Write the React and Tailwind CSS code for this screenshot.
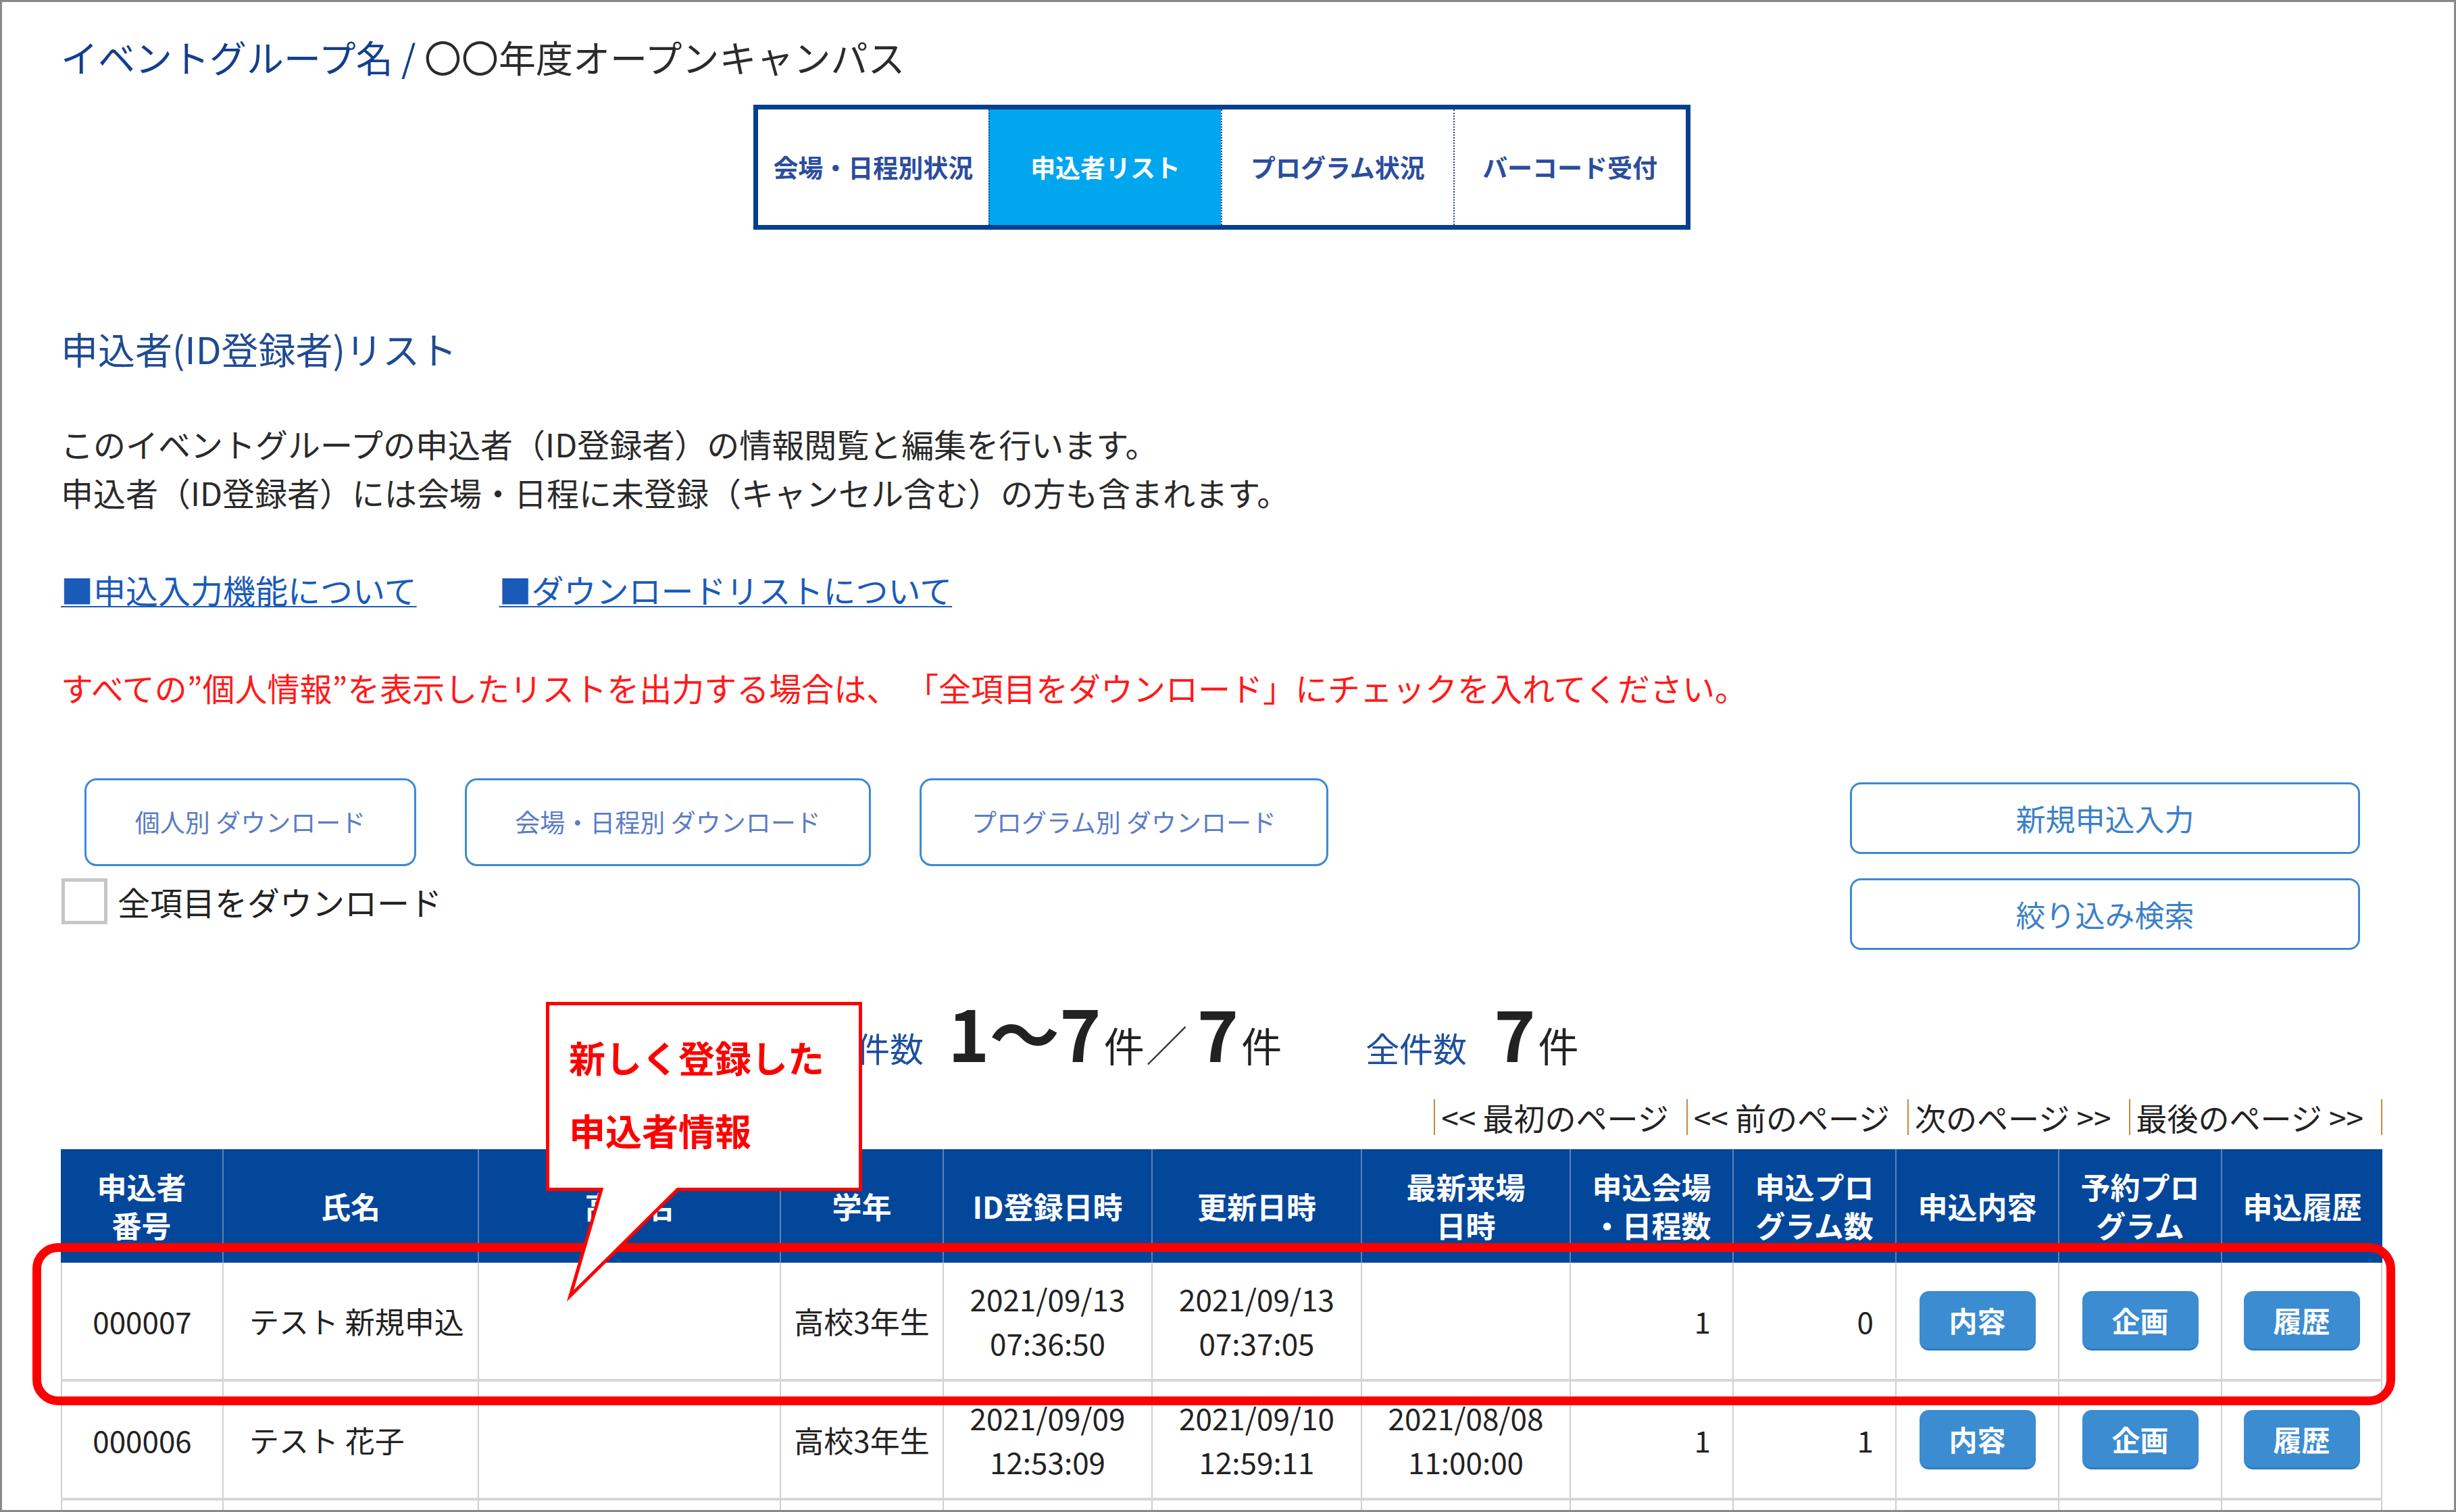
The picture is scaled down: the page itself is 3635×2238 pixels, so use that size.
import React from "react";

const tabs = [
  { label: "会場・日程別状況", active: false },
  { label: "申込者リスト", active: true },
  { label: "プログラム状況", active: false },
  { label: "バーコード受付", active: false },
];

const cols =
  "grid grid-cols-[239px_378px_447px_241px_309px_310px_309px_241px_241px_241px_241px_239px]";

const headers = [
  ["申込者", "番号"],
  ["氏名"],
  ["高校名"],
  ["学年"],
  ["ID登録日時"],
  ["更新日時"],
  ["最新来場", "日時"],
  ["申込会場", "・日程数"],
  ["申込プロ", "グラム数"],
  ["申込内容"],
  ["予約プロ", "グラム"],
  ["申込履歴"],
];

const rows = [
  {
    no: "000007",
    name: "テスト 新規申込",
    grade: "高校3年生",
    idDate: ["2021/09/13", "07:36:50"],
    upd: ["2021/09/13", "07:37:05"],
    visit: null,
    venues: "1",
    programs: "0",
  },
  {
    no: "000006",
    name: "テスト 花子",
    grade: "高校3年生",
    idDate: ["2021/09/09", "12:53:09"],
    upd: ["2021/09/10", "12:59:11"],
    visit: ["2021/08/08", "11:00:00"],
    venues: "1",
    programs: "1",
  },
];

function CellButton({ children }) {
  return (
    <div className="flex h-[88px] w-[172px] items-center justify-center rounded-[14px] border-b-[3px] border-[#2f7cc0] bg-[#3b8cd1] text-[42px] font-bold text-white">
      {children}
    </div>
  );
}

function TwoLine({ lines }) {
  if (!lines) return null;
  return (
    <div className="text-center leading-[65px]">
      {lines[0]}
      <br />
      {lines[1]}
    </div>
  );
}

function BodyRow({ r }) {
  const cell = "flex h-[172px] items-center border-l-2 border-[#d0d0d0]";
  return (
    <div className={`${cols} border-b-4 border-[#d6d6d6] text-[44px] text-[#222]`}>
      <div className={`${cell} justify-center`}>{r.no}</div>
      <div className={`${cell} pl-[38px] whitespace-nowrap`}>{r.name}</div>
      <div className={cell}></div>
      <div className={`${cell} justify-center`}>{r.grade}</div>
      <div className={`${cell} justify-center`}>
        <TwoLine lines={r.idDate} />
      </div>
      <div className={`${cell} justify-center`}>
        <TwoLine lines={r.upd} />
      </div>
      <div className={`${cell} justify-center`}>
        <TwoLine lines={r.visit} />
      </div>
      <div className={`${cell} justify-end pr-[32px]`}>{r.venues}</div>
      <div className={`${cell} justify-end pr-[32px]`}>{r.programs}</div>
      <div className={`${cell} justify-center`}>
        <CellButton>内容</CellButton>
      </div>
      <div className={`${cell} justify-center`}>
        <CellButton>企画</CellButton>
      </div>
      <div className={`${cell} justify-center border-r-2`}>
        <CellButton>履歴</CellButton>
      </div>
    </div>
  );
}

function EmptyRow() {
  const cell = "h-[172px] border-l-2 border-[#d0d0d0]";
  return (
    <div className={cols}>
      {headers.map((_, i) => (
        <div key={i} className={i === headers.length - 1 ? `${cell} border-r-2` : cell}></div>
      ))}
    </div>
  );
}

function PageLink({ children, last }) {
  return (
    <div className="flex items-center">
      <span className="h-[53px] w-[2px] bg-[#c7893c]"></span>
      <span className="pl-[9px] pr-[26px]">{children}</span>
      {last && <span className="h-[53px] w-[2px] bg-[#c7893c]"></span>}
    </div>
  );
}

export default function App() {
  return (
    <div className="relative h-[2238px] w-[3635px] overflow-hidden border-[3px] border-[#8a8a8a] bg-white font-['Noto_Sans_CJK_JP','Noto_Sans',sans-serif] text-[#222]">
      <div className="pl-[87px] pr-[106px] pt-[44px]">
        {/* page title */}
        <h1 className="whitespace-nowrap text-[55px] font-normal leading-[73px]">
          <span className="text-[#123f8c]">イベントグループ名 / </span>
          <span className="text-[#2b2b2b]">〇〇年度オープンキャンパス</span>
        </h1>

        {/* tab navigation */}
        <nav className="mx-auto mt-[35px] flex h-[185px] w-[1387px] border-[7px] border-[#053f8f]">
          {tabs.map((t, i) => (
            <div
              key={t.label}
              className={`flex flex-1 items-center justify-center text-[37px] font-bold ${
                i > 0 ? "border-l-2 border-dotted border-[#1f4690]" : ""
              } ${t.active ? "bg-[#00a6ee] text-white" : "bg-white text-[#2b4d9d]"}`}
            >
              {t.label}
            </div>
          ))}
        </nav>

        {/* section heading */}
        <h2 className="mt-[139px] text-[55px] font-normal leading-[72px] text-[#1f4b93]">
          申込者(ID登録者)リスト
        </h2>

        <p className="mt-[69px] text-[48px] leading-[72px] text-[#2a2a2a]">
          このイベントグループの申込者（ID登録者）の情報閲覧と編集を行います。
          <br />
          申込者（ID登録者）には会場・日程に未登録（キャンセル含む）の方も含まれます。
        </p>

        <div className="mt-[72px] flex gap-[122px] text-[48px] leading-[72px] text-[#1a5bb8]">
          <a className="underline decoration-2 underline-offset-[4px]">■申込入力機能について</a>
          <a className="underline decoration-2 underline-offset-[4px]">■ダウンロードリストについて</a>
        </div>

        <p className="mt-[73px] whitespace-nowrap text-[48px] leading-[72px] text-[#ff1a1a]">
          すべての”個人情報”を表示したリストを出力する場合は、 「全項目をダウンロード」にチェックを入れてください。
        </p>

        {/* download / action buttons */}
        <div className="mt-[99px] flex items-start justify-between">
          <div>
            <div className="ml-[35px] flex gap-[72px]">
              {[
                ["個人別 ダウンロード", "w-[491px]"],
                ["会場・日程別 ダウンロード", "w-[601px]"],
                ["プログラム別 ダウンロード", "w-[605px]"],
              ].map(([label, w]) => (
                <div
                  key={label}
                  className={`${w} flex h-[130px] items-center justify-center rounded-[18px] border-[3px] border-[#3e8ad2] text-[37px] text-[#5b7cc5]`}
                >
                  {label}
                </div>
              ))}
            </div>
            <div className="mt-[18px] flex items-center">
              <span className="ml-[1px] h-[68px] w-[68px] border-[5px] border-[#c6c6c6] bg-white"></span>
              <span className="ml-[15px] text-[48px] leading-[68px] text-[#222]">全項目をダウンロード</span>
            </div>
          </div>
          <div className="mr-[33px] mt-[6px] flex flex-col gap-[36px]">
            {["新規申込入力", "絞り込み検索"].map((label) => (
              <div
                key={label}
                className="flex h-[106px] w-[755px] items-center justify-center rounded-[16px] border-[3px] border-[#3d89d1] text-[44px] text-[#3b80c8]"
              >
                {label}
              </div>
            ))}
          </div>
        </div>

        {/* counts */}
        <div className="ml-[1077px] mt-[69px] flex h-[108px] items-baseline whitespace-nowrap leading-none">
          <span className="text-[50px] text-[#1d4f9e]">表示件数</span>
          <span className="ml-[36px] text-[104px] font-bold text-[#222]">1〜7</span>
          <span className="ml-[4px] text-[60px] text-[#222]">件</span>
          <span className="ml-[2px] text-[62px] font-light text-[#333]">／</span>
          <span className="ml-[14px] text-[104px] font-bold text-[#222]">7</span>
          <span className="ml-[4px] text-[60px] text-[#222]">件</span>
          <span className="ml-[124px] text-[50px] text-[#1d4f9e]">全件数</span>
          <span className="ml-[40px] text-[104px] font-bold text-[#222]">7</span>
          <span className="ml-[4px] text-[60px] text-[#222]">件</span>
        </div>

        {/* pager */}
        <div className="mt-[40px] flex h-[60px] items-center justify-end whitespace-nowrap text-[46px] text-[#222]">
          <PageLink>&lt;&lt; 最初のページ</PageLink>
          <PageLink>&lt;&lt; 前のページ</PageLink>
          <PageLink>次のページ &gt;&gt;</PageLink>
          <PageLink last>最後のページ &gt;&gt;</PageLink>
        </div>

        {/* applicant table */}
        <div className="mt-[18px]">
          <div className={`${cols} h-[168px] bg-[#03479b]`}>
            {headers.map((h, i) => (
              <div
                key={i}
                className={`flex items-center justify-center text-center text-[44px] font-bold leading-[57px] text-white ${
                  i > 0 ? "border-l-2 border-[#5f80b6]" : ""
                }`}
              >
                <div>
                  {h[0]}
                  {h[1] && (
                    <>
                      <br />
                      {h[1]}
                    </>
                  )}
                </div>
              </div>
            ))}
          </div>
          {rows.map((r) => (
            <BodyRow key={r.no} r={r} />
          ))}
          <EmptyRow />
        </div>
      </div>

      {/* highlight frame around the newest row */}
      <div className="pointer-events-none absolute left-[45px] top-[1837px] h-[240px] w-[3497px] rounded-[38px] border-[13px] border-[#ff0000]"></div>

      {/* callout balloon */}
      <svg
        className="pointer-events-none absolute left-0 top-0"
        width="3629"
        height="2232"
        viewBox="0 0 3629 2232"
      >
        <path
          d="M807.5 1482.5 H1270.5 V1757.5 H1000 L841 1915 L887 1757.5 H807.5 Z"
          fill="#ffffff"
          stroke="#ff0000"
          strokeWidth="5"
          strokeLinejoin="miter"
        />
      </svg>
      <div className="pointer-events-none absolute left-[839px] top-[1508px] text-[54px] font-bold leading-[108px] text-[#ff0000]">
        新しく登録した
        <br />
        申込者情報
      </div>
    </div>
  );
}
